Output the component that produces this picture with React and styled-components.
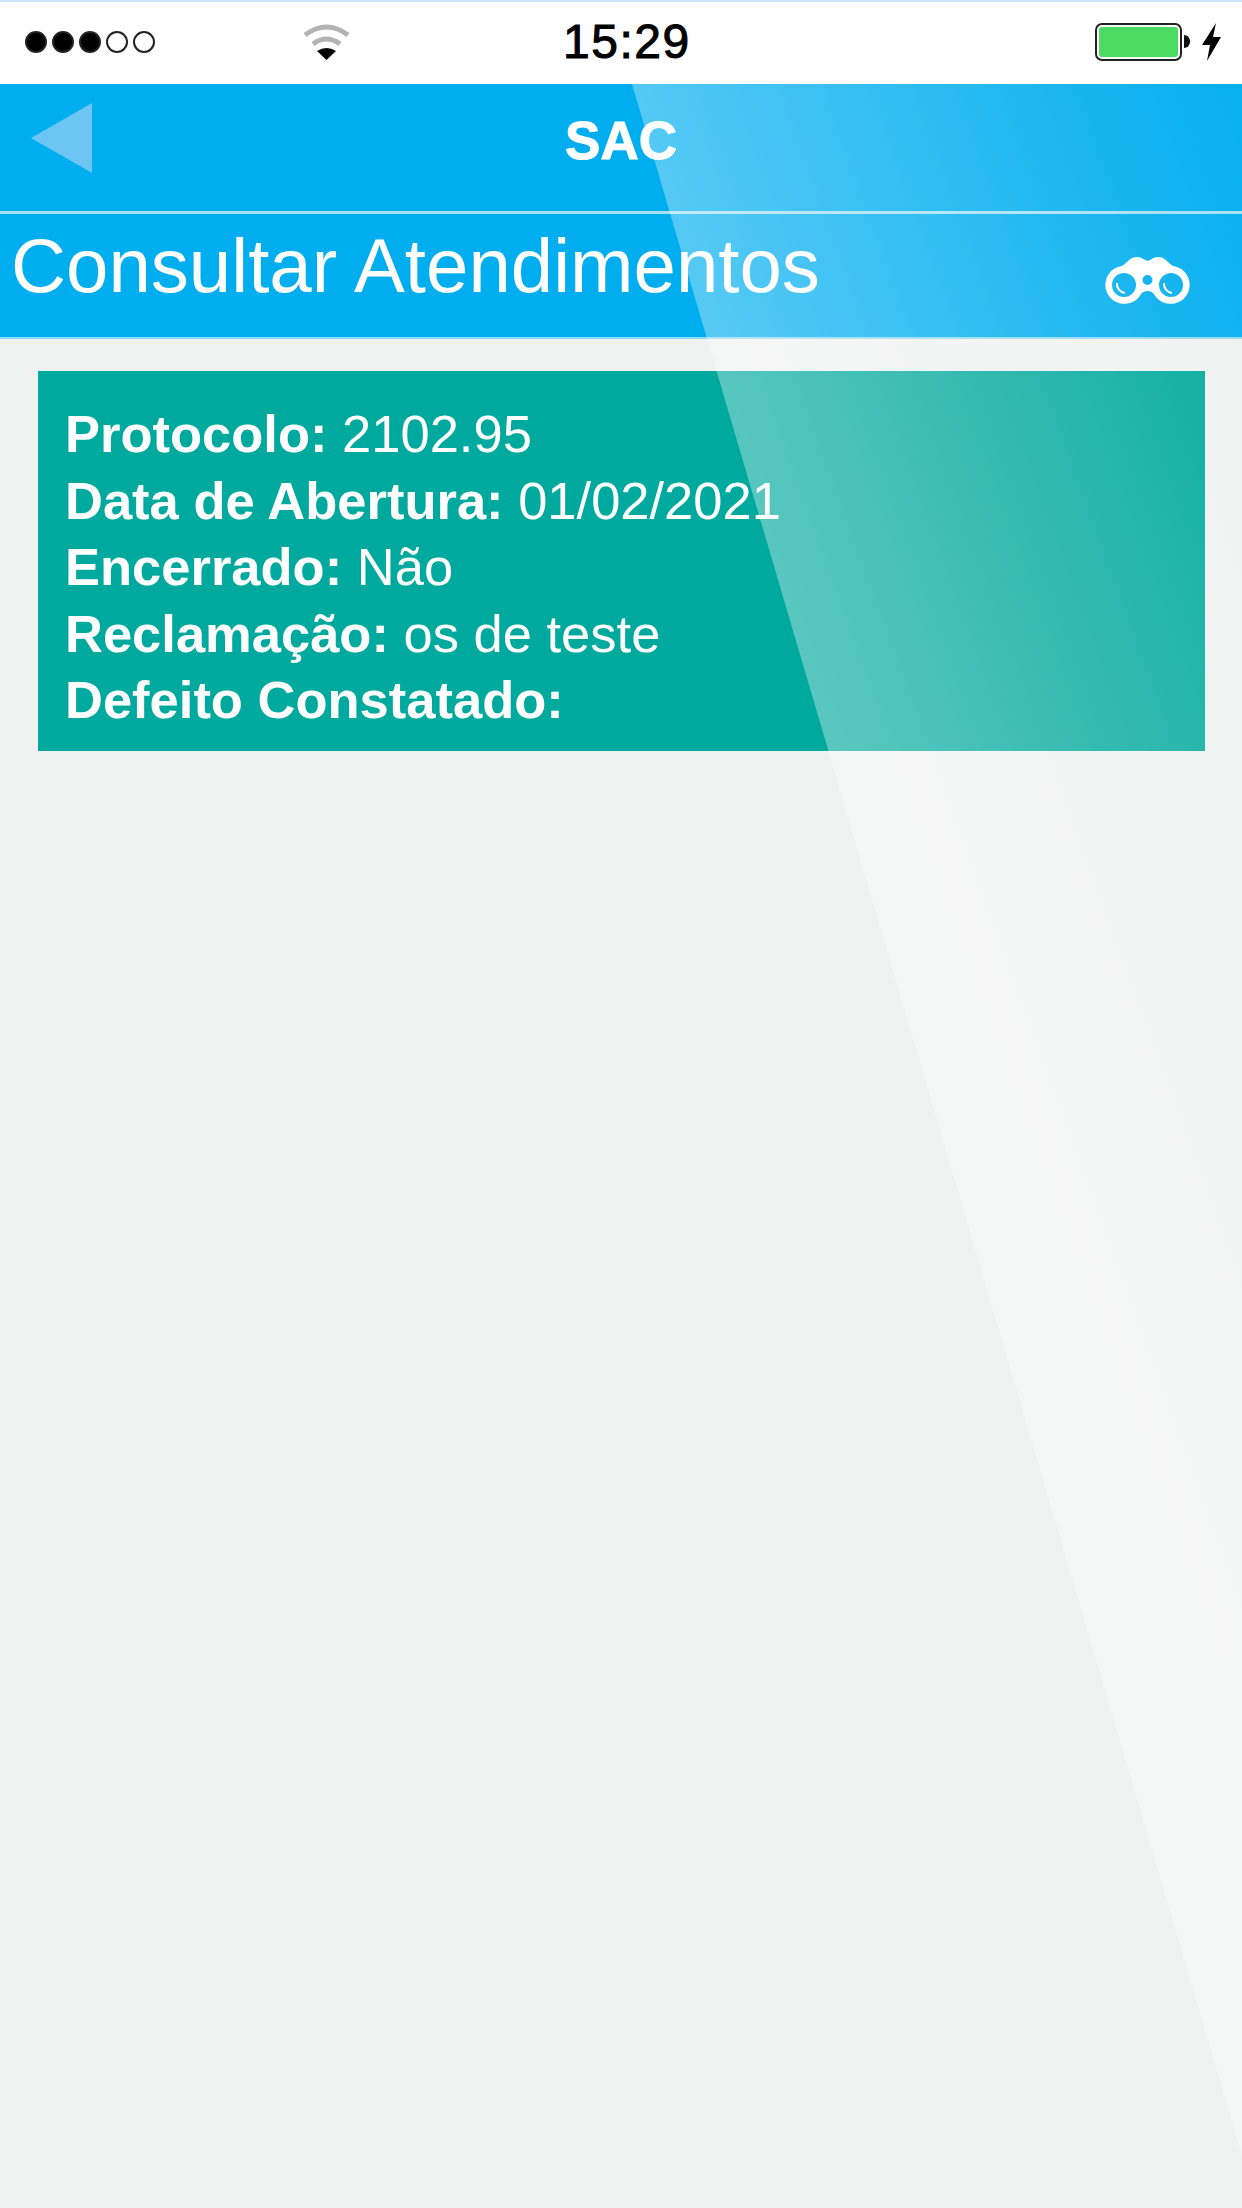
import React from "react";
import styled, { createGlobalStyle } from "styled-components";

const GlobalStyle = createGlobalStyle`
  html, body {
    margin: 0;
    padding: 0;
    background: #f0f2f1;
  }
`;

const Page = styled.div`
  position: relative;
  width: 1242px;
  height: 2208px;
  overflow: hidden;
  background: #f0f2f1;
  font-family: "Liberation Sans", Arial, sans-serif;
  color: #fff;
`;

// faixa de brilho que passa por cima da tela inteira
const Sheen = styled.div`
  position: absolute;
  left: 0;
  top: 84px;
  width: 1242px;
  height: 2124px;
  pointer-events: none;
  clip-path: polygon(632px 0, 1242px 0, 1242px 2071px);
  background: linear-gradient(
    70deg,
    rgba(255, 255, 255, 0.45) 0%,
    rgba(255, 255, 255, 0.35) 68%,
    rgba(255, 255, 255, 0.09) 92%,
    rgba(255, 255, 255, 0.03) 100%
  );
`;

const StatusBar = styled.div`
  display: flex;
  align-items: center;
  box-sizing: border-box;
  height: 84px;
  padding: 0 20px 3px 25px;
  background: #fff;
  border-top: 2px solid #cfe6fb;
  color: #000;
`;

const Signal = styled.div`
  display: flex;
  gap: 5px;
  margin-right: 148px;
`;

const Dot = styled.span`
  box-sizing: border-box;
  width: 22px;
  height: 22px;
  border-radius: 50%;
  border: 2px solid #222;
  background: ${(p) => (p.$filled ? "#000" : "#fff")};
`;

const Clock = styled.div`
  margin-left: 213px;
  font-size: 48px;
  font-weight: 400;
  letter-spacing: 1.5px;
  -webkit-text-stroke: 1px #000;
`;

const Power = styled.div`
  display: flex;
  align-items: center;
  margin-left: auto;
`;

const Battery = styled.div`
  box-sizing: border-box;
  width: 87px;
  height: 38px;
  padding: 2px;
  border: 2px solid #222;
  border-radius: 7px;
  background: #fff;
`;

const BatteryFill = styled.div`
  height: 100%;
  border-radius: 3px;
  background: #4cd964;
`;

const BatteryCap = styled.div`
  width: 6px;
  height: 13px;
  margin: 0 11px 0 2px;
  border-radius: 0 6px 6px 0;
  background: #111;
`;

const NavBar = styled.div`
  position: relative;
  display: flex;
  align-items: center;
  justify-content: center;
  box-sizing: border-box;
  height: 130px;
  padding-bottom: 14px;
  background: #00aeef;
  border-bottom: 3px solid #a5e0f7;
`;

const BackButton = styled.svg`
  position: absolute;
  left: 31px;
  top: 19px;
`;

const NavTitle = styled.div`
  font-size: 53px;
  font-weight: 700;
  -webkit-text-stroke: 1px #fff;
`;

const SubHeader = styled.div`
  display: flex;
  align-items: center;
  justify-content: space-between;
  box-sizing: border-box;
  height: 125px;
  padding: 0 51px 0 11px;
  background: #00aeef;
  border-bottom: 2px solid #8fdaf6;
`;

const PageTitle = styled.h1`
  margin: 0 0 18px;
  font-size: 76.2px;
  font-weight: 400;
  line-height: 1;
`;

const SearchIcon = styled.svg`
  margin-top: 9px;
`;

const Content = styled.div`
  padding: 32px 37px 0 38px;
`;

const Card = styled.div`
  box-sizing: border-box;
  height: 380px;
  padding: 30px 27px 0;
  background: #00a99d;
`;

const Row = styled.div`
  font-size: 52.5px;
  line-height: 66.5px;
  white-space: nowrap;
`;

const Label = styled.strong`
  font-weight: 700;
`;

const rows = [
  ["Protocolo:", "2102.95"],
  ["Data de Abertura:", "01/02/2021"],
  ["Encerrado:", "Não"],
  ["Reclamação:", "os de teste"],
  ["Defeito Constatado:", ""],
];

const App = () => {
  return (
    <Page>
      <GlobalStyle />
      <StatusBar>
        <Signal>
          {[1, 2, 3, 4, 5].map((n) => (
            <Dot key={n} $filled={n <= 3} />
          ))}
        </Signal>
        <svg width="47" height="36" viewBox="0 0 47 36">
          <path d="M2 11 Q23.5 -5 45 11" fill="none" stroke="#b3b3b3" strokeWidth="5" />
          <path d="M10 20 Q23.5 10 37 20" fill="none" stroke="#b3b3b3" strokeWidth="5" />
          <path d="M14 27 Q23.5 21 33 27 L23.5 36 Z" fill="#000" />
        </svg>
        <Clock>15:29</Clock>
        <Power>
          <Battery>
            <BatteryFill />
          </Battery>
          <BatteryCap />
          <svg width="21" height="38" viewBox="0 0 21 38">
            <path d="M15 0 L1 22 L9 22 L6 38 L20 14 L12 14 Z" fill="#000" />
          </svg>
        </Power>
      </StatusBar>

      <NavBar>
        <BackButton width="61" height="70" viewBox="0 0 61 70">
          <path d="M61 0 L61 70 L0 35 Z" fill="#6cc5f2" />
        </BackButton>
        <NavTitle>SAC</NavTitle>
      </NavBar>

      <SubHeader>
        <PageTitle>Consultar Atendimentos</PageTitle>
        <SearchIcon width="87" height="48" viewBox="0 0 87 48">
          <path
            fillRule="evenodd"
            fill="#fff"
            d="M18 10 C24 6 26 1 33 1 C38 1 40 4 43.5 5 C47 4 49 1 54 1 C61 1 63 6 69 10 A19 19 0 1 1 50 38 C47 34 40 34 37 38 A19 19 0 1 1 18 10 Z
               M20 17 A12 12 0 1 0 20 41 A12 12 0 1 0 20 17 Z
               M67 17 A12 12 0 1 0 67 41 A12 12 0 1 0 67 17 Z
               M43.5 19 A5 5 0 1 0 43.5 29 A5 5 0 1 0 43.5 19 Z"
          />
          <path d="M13 27 A9 9 0 0 0 21 37" fill="none" stroke="#fff" strokeWidth="2" />
          <path d="M60 27 A9 9 0 0 0 68 37" fill="none" stroke="#fff" strokeWidth="2" />
        </SearchIcon>
      </SubHeader>

      <Content>
        <Card>
          {rows.map(([label, value]) => (
            <Row key={label}>
              <Label>{label}</Label> {value}
            </Row>
          ))}
        </Card>
      </Content>

      <Sheen />
    </Page>
  );
};

export default App;
